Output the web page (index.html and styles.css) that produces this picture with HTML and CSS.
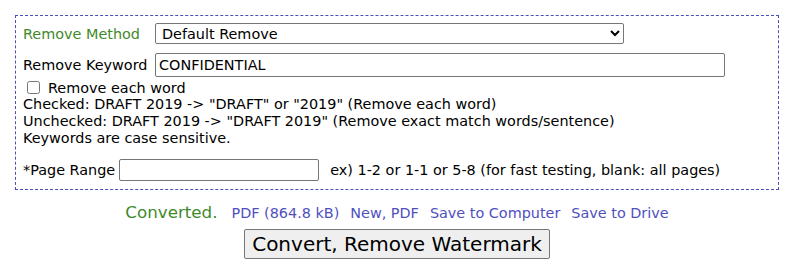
FILE: index.html
```html
<!DOCTYPE html>
<html lang="en">
<head>
    <meta charset="UTF-8">
    <title>Remove Watermark</title>
    <link rel="stylesheet" href="styles.css">
</head>
<body>
    <div class="options">
        <div class="row">
            <label class="label green" for="method">Remove Method</label>
            <select id="method" class="method">
                <option>Default Remove</option>
            </select>
        </div>
        <div class="row">
            <label class="label" for="keyword">Remove Keyword</label>
            <input type="text" id="keyword" class="keyword" value="CONFIDENTIAL">
        </div>
        <div class="check">
            <input type="checkbox" id="each">
            <label for="each">Remove each word</label>
        </div>
        <div class="note">
            Checked: DRAFT 2019 -&gt; "DRAFT" or "2019" (Remove each word)<br>
            Unchecked: DRAFT 2019 -&gt; "DRAFT 2019" (Remove exact match words/sentence)<br>
            Keywords are case sensitive.
        </div>
        <div class="row range">
            <label for="pages">*Page Range</label>
            <input type="text" id="pages" class="pages">
            <span class="hint">ex) 1-2 or 1-1 or 5-8 (for fast testing, blank: all pages)</span>
        </div>
    </div>

    <div class="result">
        <span class="done">Converted.</span>
        <a href="#">PDF (864.8 kB)</a>
        <a href="#">New, PDF</a>
        <a href="#">Save to Computer</a>
        <a href="#">Save to Drive</a>
    </div>

    <div class="actions">
        <button class="convert">Convert, Remove Watermark</button>
    </div>
</body>
</html>
```
FILE: styles.css
```css
body {
    font-family: "DejaVu Sans", Verdana, sans-serif;
    font-size: 14.4px;
    color: #000;
    margin: 15px 16px 0 15px;
}
.options {
    border: 1px dashed #4a50b8;
    padding: 7px 7px 8px 7px;
}
.row {
    display: flex;
    align-items: center;
}
.row + .row {
    margin-top: 9px;
}
.label {
    width: 132px;
    flex-shrink: 0;
    white-space: nowrap;
}
.green {
    color: #3f8a2a;
}
select, input[type="text"] {
    font-family: inherit;
    font-size: 14.4px;
    color: #000;
    background: #fff;
    border: 1px solid #767676;
    border-radius: 2px;
    box-sizing: border-box;
    margin: 0;
}
.method {
    width: 469px;
    height: 21px;
    padding: 0 2px;
}
.keyword {
    width: 570px;
    height: 24px;
    padding: 1px 3px;
}
.check {
    display: flex;
    align-items: center;
    margin: 2px 0 0 4px;
    height: 17px;
}
.check input {
    margin: 0 8px 0 0;
    width: 13px;
    height: 13px;
}
.note {
    line-height: 17px;
}
.range {
    margin-top: 12px;
}
.pages {
    width: 200px;
    height: 22px;
    margin-left: 4px !important;
}
.hint {
    margin-left: 11px;
}
.result {
    display: flex;
    justify-content: center;
    align-items: baseline;
    gap: 11px;
    margin-top: 12px;
    height: 20px;
    font-size: 14.4px;
}
.done {
    color: #3f8a2a;
    font-size: 16.7px;
    margin-right: 3px;
}
.result a {
    color: #4f4fc0;
    text-decoration: none;
}
.actions {
    text-align: center;
    margin-top: 7px;
}
.convert {
    font-family: inherit;
    font-size: 20px;
    padding: 0 7px;
    height: 30px;
    background: #efefef;
    border: 1px solid #767676;
    border-radius: 2px;
}
```
